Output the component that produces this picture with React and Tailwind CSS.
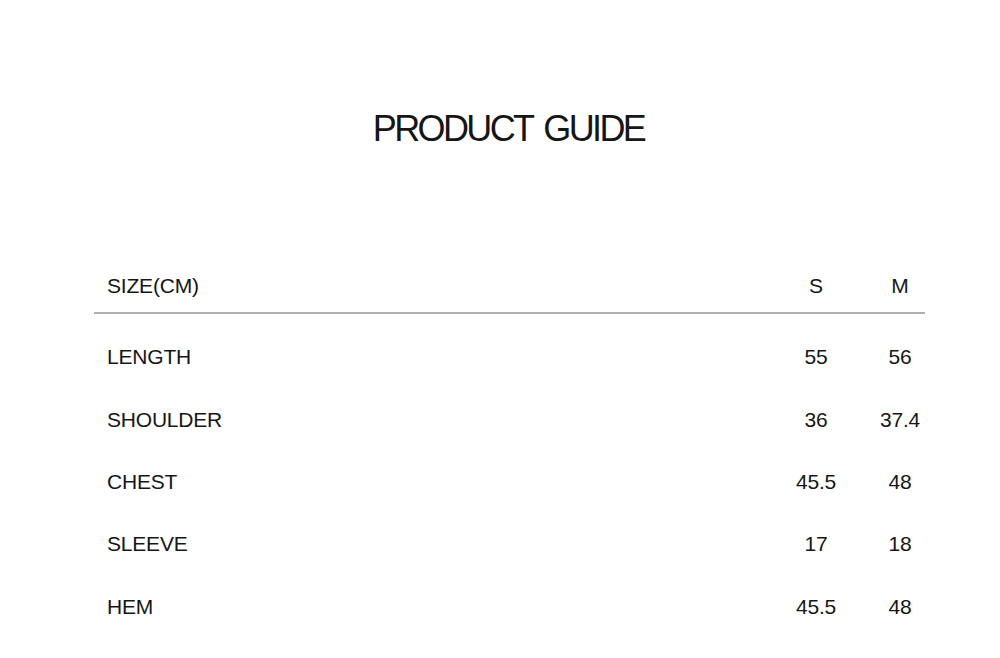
export default function App() {
  const rows = [
    { label: "LENGTH", s: "55", m: "56" },
    { label: "SHOULDER", s: "36", m: "37.4" },
    { label: "CHEST", s: "45.5", m: "48" },
    { label: "SLEEVE", s: "17", m: "18" },
    { label: "HEM", s: "45.5", m: "48" },
  ];

  return (
    <div
      className="w-[1000px] h-[658px] bg-white text-[#161616] overflow-hidden"
      style={{ fontFamily: '"Liberation Sans", Arial, sans-serif' }}
    >
      <h1 className="pt-[110px] text-center text-[36px] leading-[37px] tracking-[-2.6px] [word-spacing:4px] pl-[17px] font-normal">
        PRODUCT GUIDE
      </h1>

      <div className="mt-[113px] ml-[94px] w-[831px]">
        {/* Header */}
        <div className="flex items-center h-[52px] pl-[13px] text-[21px] tracking-[-0.2px]">
          <div className="flex-1">SIZE(CM)</div>
          <div className="w-[50px] text-center">S</div>
          <div className="w-[34px]" />
          <div className="w-[50px] text-center">M</div>
        </div>
        <div className="h-[2px] bg-[#b0b0b0]" />

        {/* Rows */}
        <div className="pt-[12px]">
          {rows.map((r) => (
            <div
              key={r.label}
              className="flex items-center h-[62.3px] pl-[13px] text-[21px] tracking-[-0.2px]"
            >
              <div className="flex-1">{r.label}</div>
              <div className="w-[50px] text-center">{r.s}</div>
              <div className="w-[34px]" />
              <div className="w-[50px] text-center">{r.m}</div>
            </div>
          ))}
        </div>
      </div>
    </div>
  );
}
